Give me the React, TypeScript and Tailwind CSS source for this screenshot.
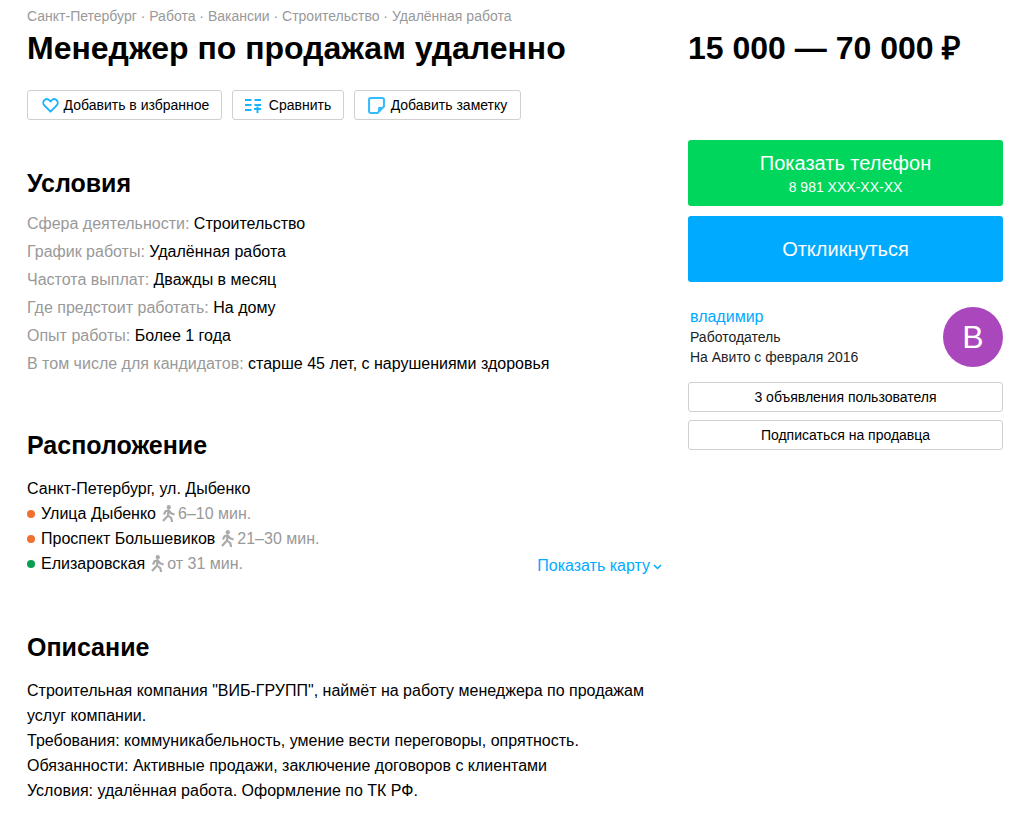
import React from "react";

const Heart = () => (
  <svg width="17" height="15" viewBox="0 0 18 16" fill="none" stroke="#1ab3ff" strokeWidth="2" className="mr-[5px]">
    <path d="M9 14.600 2.600 8.200C.9 6.500.9 3.900 2.400 2.400c1.600-1.500 4-1.400 5.500.1L9 3.700l1.100-1.200c1.500-1.500 3.900-1.600 5.500-.1 1.500 1.500 1.500 4.100-.2 5.800L9 14.600Z" strokeLinejoin="round" />
  </svg>
);
const Compare = () => (
  <svg width="16" height="15" viewBox="0 0 16 15" fill="none" stroke="#1ab3ff" strokeWidth="2" className="mr-[8px]">
    <path d="M0 2h6.500M9.500 2H16M0 7h6.500M9.500 7H16M0 12h6.500M9 11h7M12.500 8.500V15" />
  </svg>
);
const Note = () => (
  <svg width="17" height="17" viewBox="0 0 16 16" fill="none" stroke="#33bbff" strokeWidth="1.900" className="mr-[6px]">
    <path d="M2.500 1h11A1.500 1.500 0 0 1 15 2.500V9l-6 6H2.500A1.500 1.500 0 0 1 1 13.500v-11A1.500 1.500 0 0 1 2.500 1Z" strokeLinejoin="round" />
    <path d="M14.500 9.500H10.500A1 1 0 0 0 9.500 10.500V14.500Z" fill="#33bbff" stroke="none" />
  </svg>
);
const Walk = () => (
  <svg width="14" height="17" viewBox="0 0 14 17" fill="none" stroke="#aaa" strokeWidth="2.200" strokeLinejoin="round" className="ml-[5px] mr-[3px] shrink-0">
    <circle cx="7.800" cy="2.200" r="2.100" fill="#aaa" stroke="none" />
    <path d="M3 9.500 4.500 6.300 7.500 5.200 10 8.300 13.500 9.500M7.500 5.200 7 10.500 2 16M7 10.500l3.200 2.500 1 4" />
  </svg>
);

const conditions: [string, string][] = [
  ["Сфера деятельности:", "Строительство"],
  ["График работы:", "Удалённая работа"],
  ["Частота выплат:", "Дважды в месяц"],
  ["Где предстоит работать:", "На дому"],
  ["Опыт работы:", "Более 1 года"],
  ["В том числе для кандидатов:", "старше 45 лет, с нарушениями здоровья"],
];
const metro: [string, string, string][] = [
  ["bg-[#f07030]", "Улица Дыбенко", "6–10 мин."],
  ["bg-[#f07030]", "Проспект Большевиков", "21–30 мин."],
  ["bg-[#0a9f50]", "Елизаровская", "от 31 мин."],
];

export default function App() {
  return (
    <div className="w-[1024px] h-[832px] overflow-hidden bg-white text-black font-['Liberation_Sans',Arial,sans-serif] flex pl-[27px]">
      <main className="w-[636px] shrink-0">
        <div className="pt-[8px] text-[14px] leading-[17px] text-[#999] whitespace-nowrap">
          Санкт-Петербург · Работа · Вакансии · Строительство · Удалённая работа
        </div>
        <h1 className="mt-[4px] text-[32px] leading-[38px] font-bold">Менеджер по продажам удаленно</h1>
        <div className="mt-[23px] flex gap-[10px] text-[14px]">
          <button className="h-[30px] w-[195px] pl-[2px] flex items-center justify-center border border-[#d0d0d0] rounded-[3px]"><Heart />Добавить в избранное</button>
          <button className="h-[30px] w-[112px] flex items-center justify-center border border-[#d0d0d0] rounded-[3px]"><Compare />Сравнить</button>
          <button className="h-[30px] w-[167px] flex items-center justify-center border border-[#d0d0d0] rounded-[3px]"><Note />Добавить заметку</button>
        </div>

        <h2 className="mt-[47px] text-[25px] leading-[32px] font-bold">Условия</h2>
        <div className="mt-[11px] text-[16px] leading-[28px]">
          {conditions.map(([k, v]) => (
            <div key={k}><span className="text-[#999]">{k}</span> {v}</div>
          ))}
        </div>

        <h2 className="mt-[51px] text-[25px] leading-[32px] font-bold">Расположение</h2>
        <div className="mt-[15px] text-[16px] leading-[25px]">
          <div>Санкт-Петербург, ул. Дыбенко</div>
          <div className="flex justify-between items-end pr-[1px]">
            <div>
              {metro.map(([c, n, t]) => (
                <div key={n} className="flex items-center">
                  <span className={`w-[8px] h-[8px] rounded-full mr-[6px] ${c}`} />
                  {n}
                  <Walk />
                  <span className="text-[#999]">{t}</span>
                </div>
              ))}
            </div>
            <a className="flex items-center text-[#0af] mb-[-2px]">
              Показать карту
              <svg width="9" height="6" viewBox="0 0 9 6" fill="none" stroke="#0af" strokeWidth="1.500" className="ml-[3px] mt-[2px]"><path d="m1 1 3.500 3.500L8 1" /></svg>
            </a>
          </div>
        </div>

        <h2 className="mt-[55px] text-[25px] leading-[32px] font-bold">Описание</h2>
        <div className="mt-[15px] text-[16px] leading-[25px] w-[630px]">
          <p>Строительная компания "ВИБ-ГРУПП", наймёт на работу менеджера по продажам услуг компании.</p>
          <p>Требования: коммуникабельность, умение вести переговоры, опрятность.</p>
          <p>Обязанности: Активные продажи, заключение договоров с клиентами</p>
          <p>Условия: удалённая работа. Оформление по ТК РФ.</p>
        </div>
      </main>

      <aside className="ml-[25px] w-[315px] shrink-0">
        <div className="pt-[29px] text-[32px] leading-[38px] font-bold whitespace-nowrap">15 000 — 70 000 ₽</div>
        <button className="mt-[73px] w-full h-[66px] pt-[2px] bg-[#00d65b] rounded-[3px] text-white flex flex-col items-center justify-center">
          <span className="text-[20px] leading-[24px]">Показать телефон</span>
          <span className="text-[14px] leading-[20px] mt-[2px]">8 981 XXX-XX-XX</span>
        </button>
        <button className="mt-[10px] w-full h-[66px] bg-[#00aaff] rounded-[3px] text-white text-[20px]">Откликнуться</button>
        <div className="mt-[25px] flex justify-between items-start pl-[2px]">
          <div className="text-[14px] leading-[20px] text-[#222]">
            <div className="text-[16px] leading-[20px] text-[#0af]">владимир</div>
            <div>Работодатель</div>
            <div>На Авито с февраля 2016</div>
          </div>
          <div className="w-[60px] h-[60px] rounded-full bg-[#ab47bc] text-white text-[32px] flex items-center justify-center">В</div>
        </div>
        <button className="mt-[15px] w-full h-[30px] border border-[#d0d0d0] rounded-[3px] text-[14px]">3 объявления пользователя</button>
        <button className="mt-[8px] w-full h-[30px] border border-[#d0d0d0] rounded-[3px] text-[14px]">Подписаться на продавца</button>
      </aside>
    </div>
  );
}
